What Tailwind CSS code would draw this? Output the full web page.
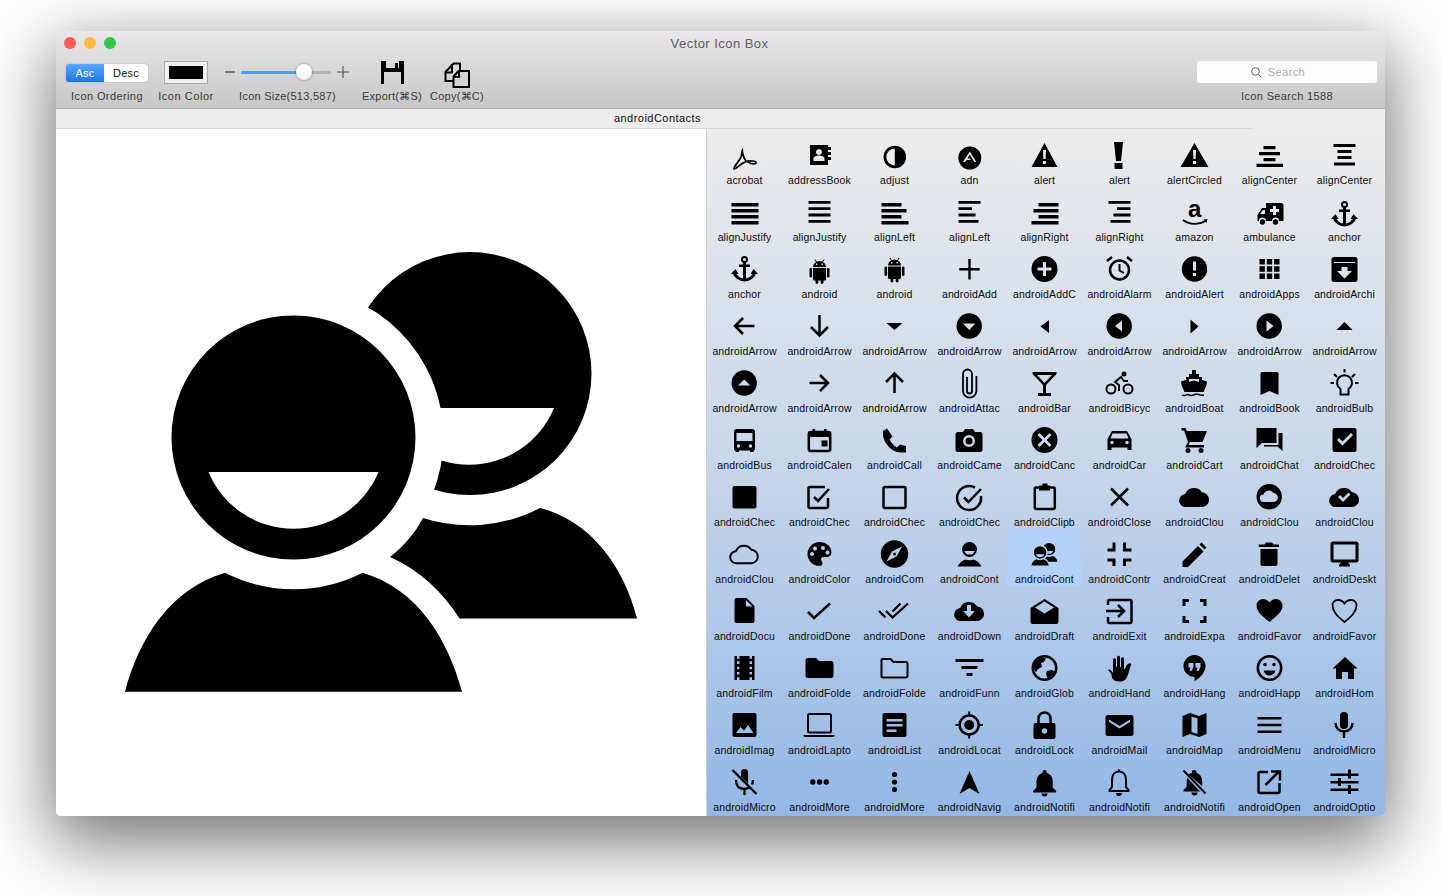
<!DOCTYPE html>
<html lang="en">
<head>
<meta charset="utf-8">
<title>Vector Icon Box</title>
<script src="https://cdn.jsdelivr.net/npm/@tailwindcss/browser@4"></script>
</head>
<body class="bg-white h-[896px] overflow-hidden font-['Liberation_Sans',Arial,sans-serif] antialiased">
<div class="pt-[31px] pl-[56px]">
<div class="w-[1329px] h-[785px] rounded-[5px] overflow-hidden flex flex-col bg-white shadow-[0_22px_70px_4px_rgba(0,0,0,0.56)]">

<header class="h-[78px] shrink-0 flex flex-col bg-linear-to-b from-[#e9e7e9] to-[#c8c7c8] border-b border-[#b1b1b1]">
  <div class="relative h-[25px] flex items-center justify-center text-[13px] tracking-[0.45px] pr-[2px] text-[#605e60]">
    <div class="absolute left-[8px] top-[6px] flex gap-[8px]">
      <span class="size-3 rounded-full bg-[#fc5b57]"></span>
      <span class="size-3 rounded-full bg-[#fdbc40]"></span>
      <span class="size-3 rounded-full bg-[#34c749]"></span>
    </div>
    Vector Icon Box
  </div>
  <div class="flex pl-[10px] pr-[8px] text-[11px] leading-3 text-[#3c3a3c] tracking-[0.25px] *:flex *:flex-col *:items-center">
    <div class="w-[82px]">
      <div class="h-[32px] flex items-center pt-[2px]">
        <div class="flex w-[82px] h-[18px] rounded-[3px] overflow-hidden bg-white shadow-[0_0_1px_rgba(0,0,0,0.5)] text-[11px]">
          <span class="w-[38px] flex items-center justify-center text-white bg-linear-to-b from-[#5aa7fc] to-[#1a72f0]">Asc</span>
          <span class="flex-1 flex items-center justify-center text-[#111]">Desc</span>
        </div>
      </div>
      <div class="mt-[2px] whitespace-nowrap tracking-[0.4px]">Icon Ordering</div>
    </div>
    <div class="w-[44px] ml-[16px]">
      <div class="h-[32px] flex items-center">
        <div class="w-[44px] h-[23px] bg-[#f1f1f1] border border-[#a9a9a9] p-[4px]"><div class="h-full bg-black"></div></div>
      </div>
      <div class="mt-[2px] whitespace-nowrap tracking-[0.55px]">Icon Color</div>
    </div>
    <div class="w-[124px] ml-[17px]">
      <div class="h-[32px] flex items-center gap-[6px]">
        <span class="w-[10px] h-[1.5px] bg-[#777]"></span>
        <div class="relative w-[90px] h-[3px] rounded-full bg-[#b4b4b4]">
          <div class="w-[58px] h-full rounded-full bg-[#4a9cf8]"></div>
          <div class="absolute left-[55px] top-[-7px] size-[16px] rounded-full bg-linear-to-b from-white to-[#f1f1f1] shadow-[0_0_2px_rgba(0,0,0,0.6)]"></div>
        </div>
        <svg class="w-[12px] h-[12px]" viewBox="0 0 12 12" stroke="#555" stroke-width="1.2"><path d="M0 6h12M6 0v12"/></svg>
      </div>
      <div class="mt-[2px] whitespace-nowrap pl-[1px]">Icon Size(513,587)</div>
    </div>
    <div class="w-[60px] ml-[13px]">
      <div class="h-[32px] flex items-center">
        <svg class="w-[23px] h-[23px]" viewBox="0 0 23 23"><path d="M0 0h5v7h9V2h3v5h1V0h5v23h-3V11H3v12H0z"/></svg>
      </div>
      <div class="mt-[2px] whitespace-nowrap">Export(⌘S)</div>
    </div>
    <div class="w-[54px] ml-[8px]">
      <div class="h-[32px] flex items-start pt-[6px]">
        <svg class="w-[26px] h-[26px]" viewBox="0 0 26 26" fill="none" stroke="#000" stroke-width="2"><path d="M9 19H1.5v-9L9.500 1.500H16V8"/><path d="M1.500 10.500H8V2"/><path d="M9.500 14.500L14.500 9H25V25H9.500z"/><path d="M9.500 15H15V9"/></svg>
      </div>
      <div class="mt-[2px] whitespace-nowrap">Copy(⌘C)</div>
    </div>
    <div class="w-[180px] ml-auto">
      <div class="h-[32px] flex items-center">
        <div class="w-[180px] h-[22px] pr-[18px] rounded-[3px] bg-white/95 flex items-center justify-center gap-[6px] text-[#a9a9a9] tracking-[0.4px]">
          <svg class="w-[11px] h-[11px]" viewBox="0 0 11 11" fill="none" stroke="#666" stroke-width="1"><circle cx="4.500" cy="4.500" r="3.800"/><path d="M7.300 7.300L10.500 10.500"/></svg>
          Search
        </div>
      </div>
      <div class="mt-[2px] whitespace-nowrap tracking-[0.35px]">Icon Search 1588</div>
    </div>
  </div>
</header>

<div class="h-[20px] shrink-0 bg-[#ececec] ">
  <div class="w-[1197px] h-[20px] pl-[6px] border-b border-[#d6d6d6] flex items-center justify-center text-[11px] tracking-[0.47px] text-[#111]">androidContacts</div>
</div>

<main class="flex-1 min-h-0 flex">
  <div class="w-[650px] bg-white">
    <svg class="w-[650px] h-[687px] text-white" viewBox="56 129 650 687">
      <g id="ct">
        <circle cx="470" cy="373.600" r="121.500"/>
        <path fill="currentColor" d="M384 408h170a92 92 0 0 1-170 0z"/>
        <path d="M540 508c48 12 83 55 97 110.500H459.500c-18-28-40-48-69.500-61.500c14-11 25-24 33-39A152 152 0 0 0 540 508z"/>
        <circle cx="293.500" cy="437.500" r="150" fill="currentColor"/>
        <circle cx="293.500" cy="437.500" r="122"/>
        <path fill="currentColor" d="M208.500 472h170a92 92 0 0 1-170 0z"/>
        <path d="M225 572.700A152 152 0 0 0 362.600 572.700c55 16 85 66 99.400 119H125c14-53 45-103 100-119z"/>
      </g>
    </svg>
  </div>
  <div class="flex-1 border-l border-[#cfcfcf] bg-linear-to-b from-[#ececec] via-[#c6d6ea] to-[#93b7e6] overflow-hidden pt-[1px]">
    <div class="grid grid-cols-[repeat(9,75px)] auto-rows-[57px] *:flex *:flex-col *:items-center *:pt-[10px] *:pr-[2px] text-[10.5px] tracking-[0.15px] text-[#0c0c0c] [&_svg]:size-8 [&_svg]:shrink-0 [&_path]:[fill-rule:evenodd] [&_p]:mt-[2px] [&_p]:ml-[2px] [&_p]:leading-3 [&_p]:whitespace-nowrap">

<div><svg viewBox="0 0 32 32" fill="none" stroke="#000" stroke-width="1.700"><path d="M15 9c-1.500 0 -.5 8 3 12c2 2 8.500 4 10 2c1-2-6-3-11-1c-5 2-10 8-11 7c-1-2 5-7 7-12c1-3 1-8 2-8z"/></svg><p>acrobat</p></div>
<div><svg viewBox="0 0 32 32"><path d="M7 5h18v20H7zM16 9a3 3 0 1 0 .01 0zM10.500 21v-2.500c0-2 3-3 5.500-3s5.500 1 5.500 3V21z"/><path d="M24.500 7h3.500v3h-3.500zM24.500 12h3.500v3h-3.500zM24.500 17h3.500v3h-3.500z"/></svg><p>addressBook</p></div>
<div><svg viewBox="0 0 32 32"><path d="M5.500 17a11.300 11.300 0 1 0 22.600 0a11.300 11.300 0 1 0-22.600 0zM16.800 8.500a8.500 8.500 0 0 0 0 17z"/></svg><p>adjust</p></div>
<div><svg viewBox="0 0 32 32"><path d="M5.300 18a11.500 11.500 0 1 0 23 0a11.500 11.500 0 1 0-23 0zM16.800 11.500l6.500 10.500h-2l-4.500-7.500-2.300 4h2.500l1 1.500h-4.500l-1.500 2h-2z"/></svg><p>adn</p></div>
<div><svg viewBox="0 0 32 32"><path d="M16.500 3L29.500 27H3.500zM15 10h3l-.4 9h-2.200zM15 21h3v3h-3z"/></svg><p>alert</p></div>
<div><svg viewBox="0 0 32 32"><path d="M11 2h9l-2 19h-5zM11.500 23h8v6h-8z"/></svg><p>alert</p></div>
<div><svg viewBox="0 0 32 32"><path d="M16.500 3L30.500 27H2.500zM15 10h3l-.4 9h-2.200zM15 21h3v3h-3z"/></svg><p>alertCircled</p></div>
<div><svg viewBox="0 0 32 32"><path d="M10.500 6h12v3.300h-12zM6 12h21v3.300H6zM10.500 18h12v3.300h-12zM3.500 23.700h26.500V27H3.500z"/></svg><p>alignCenter</p></div>
<div><svg viewBox="0 0 32 32"><path d="M5.500 4h22v3h-22zM9.500 10h14v3h-14zM9.500 16h14v3h-14zM6 22.500h21v3H6z"/></svg><p>alignCenter</p></div>

<div><svg viewBox="0 0 32 32"><path d="M3.500 6h27v3.500h-27zM3.500 12h27v3.500h-27zM3.500 18h27v3.500h-27zM3.500 24h27v3.500h-27z"/></svg><p>alignJustify</p></div>
<div><svg viewBox="0 0 32 32"><path d="M5.500 4h22v2.800h-22zM5.500 10.300h22v2.800h-22zM5.500 16.600h22v2.800h-22zM5.500 22.900h22v2.800h-22z"/></svg><p>alignJustify</p></div>
<div><svg viewBox="0 0 32 32"><path d="M3.500 6h20v3.500h-20zM3.500 12h25v3.500h-25zM3.500 18h20v3.500h-20zM3.500 24h27v3.500h-27z"/></svg><p>alignLeft</p></div>
<div><svg viewBox="0 0 32 32"><path d="M5.500 4h22v2.800h-22zM5.500 10.300h13.500v2.800H5.500zM5.500 16.600h17v2.800h-17zM5.500 22.900h20v2.800h-20z"/></svg><p>alignLeft</p></div>
<div><svg viewBox="0 0 32 32"><path d="M10.500 6h20v3.500h-20zM5.500 12h25v3.500h-25zM10.500 18h20v3.500h-20zM3.500 24h27v3.500h-27z"/></svg><p>alignRight</p></div>
<div><svg viewBox="0 0 32 32"><path d="M5.500 4h22v2.800h-22zM14 10.300h13.500v2.800H14zM10.500 16.600h17v2.800h-17zM7.500 22.900h20v2.800h-20z"/></svg><p>alignRight</p></div>
<div><svg class="overflow-visible" viewBox="0 0 32 32"><text x="10" y="20" font-size="24" font-weight="700" font-family="Liberation Sans">a</text><path fill="none" stroke="#000" stroke-width="1.800" d="M5 23c7 5 16 5 22.500 1"/><path d="M25.500 22.500l4-.5-1 4z"/></svg><p>amazon</p></div>
<div><svg viewBox="0 0 32 32"><path d="M13 6h15a2.500 2.500 0 0 1 2.500 2.500V24h-4.500a3.500 3.500 0 0 0-7 0h-6a3.500 3.500 0 0 0-7 0H4.500v-6L9 11h4zM20 9h3v3h3v3h-3v3h-3v-3h-3v-3h3zM7 17l3-4h2v4z"/><circle cx="9.500" cy="25" r="2.700"/><circle cx="22.500" cy="25" r="2.700"/></svg><p>ambulance</p></div>
<div><svg viewBox="0 0 32 32"><g id="an"><circle cx="16.500" cy="7.500" r="2.500" fill="none" stroke="#000" stroke-width="2"/><path d="M15 10h3v17h-3z"/><path d="M11 12.500h11V15H11z"/><path fill="none" stroke="#000" stroke-width="3" d="M6 20c1 5 6 8 10.500 8s9.500-3 10.500-8"/><path d="M3 22l4.500-5 3 5zM30 22l-4.500-5-3 5z"/></g></svg><p>anchor</p></div>

<div><svg viewBox="0 0 32 32"><use href="#an" y="-2"/></svg><p>anchor</p></div>
<div><svg viewBox="0 0 32 32"><g id="dr"><path d="M10 13a6.500 6 0 0 1 13 0zM13 9.500h1.500V11H13zM18.500 9.500H20V11h-1.500z"/><path stroke="#000" d="M12 5.500l1.500 2.500M21 5.500L19.500 8"/><path d="M10 14h13v11a1.500 1.500 0 0 1-1.500 1.500h-10A1.500 1.500 0 0 1 10 25z"/><rect x="6.500" y="14" width="2.600" height="9.500" rx="1.300"/><rect x="23.900" y="14" width="2.600" height="9.500" rx="1.300"/><rect x="12.500" y="25" width="2.800" height="5" rx="1.400"/><rect x="17.700" y="25" width="2.800" height="5" rx="1.400"/></g></svg><p>android</p></div>
<div><svg viewBox="0 0 32 32"><use href="#dr" y="-1.500"/></svg><p>android</p></div>
<div><svg viewBox="0 0 32 32"><path d="M15.300 5h2.400v9h9v2.400h-9v9h-2.400v-9h-9V14h9z"/></svg><p>androidAdd</p></div>
<div><svg viewBox="0 0 32 32"><path d="M3.500 15a13 13 0 1 0 26 0a13 13 0 1 0-26 0zM15 8h3v5.500h5.500v3H18V22h-3v-5.500H9.500v-3H15z"/></svg><p>androidAddC</p></div>
<div><svg viewBox="0 0 32 32" fill="none" stroke="#000" stroke-width="2.500"><circle cx="16.500" cy="16" r="9.500"/><path stroke-width="2" d="M16.500 10v6.500l4.500 2.500"/><path d="M4 7l5-4M29 7l-5-4"/></svg><p>androidAlarm</p></div>
<div><svg viewBox="0 0 32 32"><path d="M3.800 15a12.700 12.700 0 1 0 25.400 0a12.700 12.700 0 1 0-25.400 0zM15 7.500h3v9h-3zM15 19h3v3h-3z"/></svg><p>androidAlert</p></div>
<div><svg viewBox="0 0 32 32"><path fill="none" stroke="#000" stroke-width="5.400" stroke-dasharray="5.400 1.900" d="M6.500 7.700h20M6.500 15h20M6.500 22.300h20"/></svg><p>androidApps</p></div>
<div><svg viewBox="0 0 32 32"><path d="M6 3h21a2.500 2.500 0 0 1 2.500 2.500v20A2.500 2.500 0 0 1 27 28H6a2.500 2.500 0 0 1-2.500-2.500v-20A2.500 2.500 0 0 1 6 3zM6 8h21v1H6zM13.500 13h6v4h4.500l-7.500 7.500-7.500-7.500h4.500z"/></svg><p>androidArchi</p></div>

<div><svg viewBox="0 0 32 32" fill="none" stroke="#000" stroke-width="2.500"><path d="M7.500 15h19M15 7l-8 8 8 8"/></svg><p>androidArrow</p></div>
<div><svg viewBox="0 0 32 32" fill="none" stroke="#000" stroke-width="2.500"><path d="M16.500 4v20M8 16l8.500 8.500L25 16"/></svg><p>androidArrow</p></div>
<div><svg viewBox="0 0 32 32"><path d="M8.500 12h16l-8 7z"/></svg><p>androidArrow</p></div>
<div><svg viewBox="0 0 32 32"><path d="M3.500 15a12.700 12.700 0 1 0 25.400 0a12.700 12.700 0 1 0-25.400 0zM10 12.500h12.400l-6.200 6.500z"/></svg><p>androidArrow</p></div>
<div><svg viewBox="0 0 32 32"><path d="M21 9v13l-8.500-6.500z"/></svg><p>androidArrow</p></div>
<div><svg viewBox="0 0 32 32"><path d="M3.500 15a12.700 12.700 0 1 0 25.400 0a12.700 12.700 0 1 0-25.400 0zM19 9.500v11l-7-5.500z"/></svg><p>androidArrow</p></div>
<div><svg viewBox="0 0 32 32"><path d="M12.500 8.500l8 7-8 7z"/></svg><p>androidArrow</p></div>
<div><svg viewBox="0 0 32 32"><path d="M3.500 15a12.700 12.700 0 1 0 25.400 0a12.700 12.700 0 1 0-25.400 0zM13.500 9.500l7 5.500-7 5.500z"/></svg><p>androidArrow</p></div>
<div><svg viewBox="0 0 32 32"><path d="M8.500 19l8-8 8 8z"/></svg><p>androidArrow</p></div>

<div><svg viewBox="0 0 32 32"><path d="M3.500 15a12.700 12.700 0 1 0 25.400 0a12.700 12.700 0 1 0-25.400 0zM10 17.500l6.200-6 6.200 6z"/></svg><p>androidArrow</p></div>
<div><svg viewBox="0 0 32 32" fill="none" stroke="#000" stroke-width="2.500"><path d="M6.500 15h19M17 7l8 8-8 8"/></svg><p>androidArrow</p></div>
<div><svg viewBox="0 0 32 32" fill="none" stroke="#000" stroke-width="2.500"><path d="M16.500 25V6M8 14l8.500-8.500L25 14"/></svg><p>androidArrow</p></div>
<div><svg viewBox="0 0 32 32" fill="none" stroke="#000" stroke-width="1.800"><path d="M14 9v14a2.500 2.500 0 0 0 5 0V6a4.500 4.500 0 0 0-9 0v17a6.700 6.700 0 0 0 13.400 0V8"/></svg><p>androidAttac</p></div>
<div><svg viewBox="0 0 32 32"><path d="M4.500 4h24v2L18 17v8h5v3H10v-3h5V17L4.500 6zM9 7l7.500 8L24 7z"/></svg><p>androidBar</p></div>
<div><svg viewBox="0 0 32 32"><g fill="none" stroke="#000" stroke-width="2"><circle cx="8" cy="21" r="4.500"/><circle cx="25" cy="21" r="4.500"/><path d="M16 23v-6l-4-3 6-5 3 4h4"/></g><circle cx="21" cy="6" r="2.500"/></svg><p>androidBicyc</p></div>
<div><svg viewBox="0 0 32 32"><path d="M14 2h4v4h-4z"/><path d="M11 6h10v3h3v3l5 1.500c0 4-2.500 8-3.500 10.500h-19C5.500 21.500 3 17.500 3 13.500L8 12V9h3zM11 11h10v3l-5-1.500-5 1.500z"/><path fill="none" stroke="#000" stroke-width="1.500" d="M4 27c3 2 5-1 6-.5s3 2 6.500 0 4.500 2 9.500.5"/></svg><p>androidBoat</p></div>
<div><svg viewBox="0 0 32 32"><path d="M9 4h15a1.500 1.500 0 0 1 1.500 1.500V27l-9-4-9 4V5.500A1.500 1.500 0 0 1 9 4z"/></svg><p>androidBook</p></div>
<div><svg viewBox="0 0 32 32" fill="none" stroke="#000" stroke-width="2"><path d="M12.500 21a7.500 7.500 0 1 1 8 0v5.500h-8z"/><path d="M16.500 1v3.500M6 6l3 3M27 6l-3 3M2.500 15h3.500M27 15h3.500"/></svg><p>androidBulb</p></div>

<div><svg viewBox="0 0 32 32"><path d="M9 4h15a3 3 0 0 1 3 3v17a1.500 1.500 0 0 1-1.500 1.500V27H22v-1.500H11V27H7.500v-1.500A1.500 1.500 0 0 1 6 24V7a3 3 0 0 1 3-3zM8.500 8h16v8h-16zM8.800 21a1.700 1.700 0 1 0 3.400 0a1.700 1.700 0 1 0-3.400 0zM20.800 21a1.700 1.700 0 1 0 3.400 0a1.700 1.700 0 1 0-3.400 0z"/></svg><p>androidBus</p></div>
<div><svg viewBox="0 0 32 32"><rect x="5.800" y="7" width="21.400" height="19" rx="2" fill="none" stroke="#000" stroke-width="2.500"/><path d="M5 7h23v5H5zM9.500 4H12v3H9.500zM21 4h2.500v3H21zM18.500 15.500h6v6h-6z"/></svg><p>androidCalen</p></div>
<div><svg viewBox="0 0 32 32"><path d="M9 3.500l-4 2.500c-.5 7 2 12 6.500 16.500S21 28 28 27.500V21l-6-1.500-3 3c-3-1.500-6-5-7.500-8l3-3z"/></svg><p>androidCall</p></div>
<div><svg viewBox="0 0 32 32"><path d="M12 4h8l2 3h5a2.500 2.500 0 0 1 2.500 2.500v15a2.500 2.500 0 0 1-2.500 2.500H5a2.500 2.500 0 0 1-2.500-2.500v-15A2.500 2.500 0 0 1 5 7h5zM10 16a6 6 0 1 0 12 0a6 6 0 1 0-12 0zM12.500 16a3.500 3.500 0 1 0 7 0a3.500 3.500 0 1 0-7 0z"/></svg><p>androidCame</p></div>
<div><svg viewBox="0 0 32 32"><path d="M3.500 15a13 13 0 1 0 26 0a13 13 0 1 0-26 0zM11.500 8l5 5 5-5 2 2-5 5 5 5-2 2-5-5-5 5-2-2 5-5-5-5z"/></svg><p>androidCanc</p></div>
<div><svg viewBox="0 0 32 32"><path d="M9 6h15l4.500 8v11h-4v-2.500h-16V25h-4V14zM9.500 8.500L7.500 13.500h18l-2-5zM7.200 17.500a1.800 1.800 0 1 0 3.600 0a1.800 1.800 0 1 0-3.600 0zM22.200 17.500a1.800 1.800 0 1 0 3.600 0a1.800 1.800 0 1 0-3.600 0z"/></svg><p>androidCar</p></div>
<div><svg viewBox="0 0 32 32"><path d="M3.500 3h4l1.500 3H29l-4.500 11H12L10.500 20H26v2.500H7l3-5.500L6 5.500H3.500z"/><circle cx="10" cy="25.500" r="2.500"/><circle cx="23" cy="25.500" r="2.500"/></svg><p>androidCart</p></div>
<div><svg viewBox="0 0 32 32"><path d="M3.500 3h20v15H9l-5.500 5z"/><path d="M25.500 8h4v18l-5-4.500H11V20h14.500z"/></svg><p>androidChat</p></div>
<div><svg viewBox="0 0 32 32"><path d="M6.500 3h20a2 2 0 0 1 2 2v20a2 2 0 0 1-2 2h-20a2 2 0 0 1-2-2V5a2 2 0 0 1 2-2zM9 15l2-2 3.500 3.500L23 8l2 2-10.500 10.500z"/></svg><p>androidChec</p></div>

<div><svg viewBox="0 0 32 32"><rect x="4.500" y="4" width="24" height="22.500" rx="2"/></svg><p>androidChec</p></div>
<div><svg viewBox="0 0 32 32" fill="none" stroke="#000" stroke-width="2.500"><path d="M25 16v8.500a1.500 1.500 0 0 1-1.500 1.500H7a1.500 1.500 0 0 1-1.500-1.500v-18A1.500 1.500 0 0 1 7 5h15"/><path d="M11 15l4 4 11-12"/></svg><p>androidChec</p></div>
<div><svg viewBox="0 0 32 32" fill="none" stroke="#000" stroke-width="2.500"><rect x="5.500" y="5" width="22" height="21" rx="1.500"/></svg><p>androidChec</p></div>
<div><svg viewBox="0 0 32 32" fill="none" stroke="#000" stroke-width="2.500"><path d="M27.900 14A12 12 0 1 1 22 5.600"/><path d="M11 15.500l4.500 4.500L28 7"/></svg><p>androidChec</p></div>
<div><svg viewBox="0 0 32 32"><rect x="6.800" y="5.500" width="20" height="21.500" rx="1.500" fill="none" stroke="#000" stroke-width="2.500"/><path d="M11 3.500h3.500V1.500h5v2H22V8.500H11z"/></svg><p>androidClipb</p></div>
<div><svg viewBox="0 0 32 32" fill="none" stroke="#000" stroke-width="2.500"><path d="M8 6.500l17 17M25 6.500l-17 17"/></svg><p>androidClose</p></div>
<div><svg viewBox="0 0 32 32"><path d="M8 25a6.500 6.500 0 0 1-.8-13A9.500 9.500 0 0 1 24 10.300a7.300 7.300 0 0 1-.5 14.700z"/></svg><p>androidClou</p></div>
<div><svg viewBox="0 0 32 32"><path d="M3.500 14.700a12.700 12.700 0 1 0 25.400 0a12.700 12.700 0 1 0-25.400 0zM11 20a3.800 3.800 0 0 1-.5-7.600A5.700 5.700 0 0 1 20.500 11a4.400 4.400 0 0 1-.3 9z"/></svg><p>androidClou</p></div>
<div><svg viewBox="0 0 32 32"><path d="M8 25a6.500 6.500 0 0 1-.8-13A9.500 9.500 0 0 1 24 10.300a7.300 7.300 0 0 1-.5 14.700zM10 15l2-2 3 3 5.500-5.500 2 2-7.500 7.500z"/></svg><p>androidClou</p></div>

<div><svg viewBox="0 0 32 32"><path transform="translate(1.200 1.200) scale(.92)" fill="none" stroke="#000" stroke-width="2.100" d="M8 25a6.500 6.500 0 0 1-.8-13A9.500 9.500 0 0 1 24 10.300a7.300 7.300 0 0 1-.5 14.700z"/></svg><p>androidClou</p></div>
<div><svg viewBox="0 0 32 32"><path d="M16.500 3C10 3 4.500 8.500 4.500 15s5.500 12 12 12c2 0 3-1.200 3-2.700c0-1.800-1.500-2.500-1.500-4s1-2.300 3-2.300h3c2.500 0 4.500-2 4.500-4.500C28.500 7.500 23 3 16.500 3zM7 15a2 2 0 1 0 4 0a2 2 0 1 0-4 0zM10 9.500a2 2 0 1 0 4 0a2 2 0 1 0-4 0zM18 9a2 2 0 1 0 4 0a2 2 0 1 0-4 0zM22.500 13.500a2 2 0 1 0 4 0a2 2 0 1 0-4 0z"/></svg><p>androidColor</p></div>
<div><svg viewBox="0 0 32 32"><path d="M2.800 15a13.700 13.700 0 1 0 27.400 0a13.700 13.700 0 1 0-27.400 0zM24 7.500l-5.500 10-10 5 5.500-10z"/><circle cx="16.500" cy="15" r="1.500"/></svg><p>androidCom</p></div>
<div><svg viewBox="0 0 32 32"><path d="M9 10.500a7.500 7.500 0 1 0 15 0a7.500 7.500 0 1 0-15 0zM11.200 12h10.600a5.700 5.700 0 0 1-10.600 0z"/><path d="M12.500 20.500c2.500 1 5.500 1 8 0c3.500 1 6 3.500 8 7H4.500c2-3.500 4.500-6 8-7z"/></svg><p>androidCont</p></div>
<div class="bg-[#b3d1f9]"><svg class="text-[#b3d1f9]" viewBox="0 0 32 32"><use href="#ct" transform="translate(-2.900 -8.900) scale(.051)"/></svg><p>androidCont</p></div>
<div><svg viewBox="0 0 32 32" fill="none" stroke="#000" stroke-width="3"><path d="M4.500 11h6.500V3.500M21.500 3.500V11h7M4.500 21h6.500v6M28.500 21h-7v6"/></svg><p>androidContr</p></div>
<div><svg viewBox="0 0 32 32"><path d="M4.500 28v-5.500L20 7l5.500 5.500L10 28zM21.500 5.500l2-2 5 5-2 2z"/></svg><p>androidCreat</p></div>
<div><svg viewBox="0 0 32 32"><path d="M7.500 10h17v15a2 2 0 0 1-2 2h-13a2 2 0 0 1-2-2z"/><path d="M5.500 5.500h6l1.500-2h6l1.500 2h5.500V8h-20z"/></svg><p>androidDelet</p></div>
<div><svg viewBox="0 0 32 32"><path d="M5 2.500h23a2.500 2.500 0 0 1 2.500 2.500v16a2.500 2.500 0 0 1-2.500 2.500h-8l2 2.500v1.500H11v-1.500l2-2.500H5a2.500 2.500 0 0 1-2.500-2.500V5A2.500 2.500 0 0 1 5 2.500zM5.500 5.500v15h22v-15z"/></svg><p>androidDeskt</p></div>

<div><svg viewBox="0 0 32 32"><path d="M8.500 2h10l8 8v15a2 2 0 0 1-2 2h-16a2 2 0 0 1-2-2V4a2 2 0 0 1 2-2zM18 4v6.500h6.500z"/></svg><p>androidDocu</p></div>
<div><svg viewBox="0 0 32 32" fill="none" stroke="#000" stroke-width="2.500"><path d="M5 16l6 6L27 7.500"/></svg><p>androidDone</p></div>
<div><svg viewBox="0 0 32 32" fill="none" stroke="#000" stroke-width="2.300"><path d="M1 15l6.500 6.500M8 15l6.500 6.500L30 7.500M14.500 15.500l8-8"/></svg><p>androidDone</p></div>
<div><svg viewBox="0 0 32 32"><path d="M8 25a6.500 6.500 0 0 1-.8-13A9.500 9.500 0 0 1 24 10.300a7.300 7.300 0 0 1-.5 14.700zM14 9h4v6h4l-6 6.500L10 15h4z"/></svg><p>androidDown</p></div>
<div><svg viewBox="0 0 32 32"><path d="M16.500 3l14 9v14a2 2 0 0 1-2 2H4.500a2 2 0 0 1-2-2V12zM7 11.500l9.500 6 9.500-6-9.500-6z"/></svg><p>androidDraft</p></div>
<div><svg viewBox="0 0 32 32" fill="none" stroke="#000" stroke-width="2.500"><path d="M5 9V5.500A1.500 1.500 0 0 1 6.500 4h20.500a1.500 1.500 0 0 1 1.500 1.500v20A1.500 1.500 0 0 1 27 27H6.500A1.500 1.500 0 0 1 5 25.500V21"/><path d="M3 15h18M15 9l6 6-6 6"/></svg><p>androidExit</p></div>
<div><svg viewBox="0 0 32 32" fill="none" stroke="#000" stroke-width="3"><path d="M6 10V4.500h5M22 4.500h5V10M6 20v5.500h5M22 25.500h5V20"/></svg><p>androidExpa</p></div>
<div><svg viewBox="0 0 32 32"><path d="M16.500 26C10 20.500 3.500 16 3.500 9.500C3.500 6 6.500 3 10 3c2.500 0 5 1.300 6.500 3.500C18 4.300 20.500 3 23 3c3.500 0 6.500 3 6.500 6.500c0 6.500-6.500 11-13 16.500z"/></svg><p>androidFavor</p></div>
<div><svg viewBox="0 0 32 32" fill="none" stroke="#000" stroke-width="1.800"><path d="M16.500 26C10 20.500 4.500 16 4.500 9.500C4.500 6 7 4 10 4c2.500 0 5 1.300 6.500 3.500C18 5.300 20.500 4 23 4c3 0 5.500 2 5.500 5.500c0 6.500-5.500 11-12 16.500z"/></svg><p>androidFavor</p></div>

<div><svg viewBox="0 0 32 32"><path transform="translate(1.500 -1) scale(1.250 1.330)" d="M18 3v2h-2V3H8v2H6V3H4v18h2v-2h2v2h8v-2h2v2h2V3h-2zM8 17H6v-2h2v2zm0-4H6v-2h2v2zm0-4H6V7h2v2zm10 8h-2v-2h2v2zm0-4h-2v-2h2v2zm0-4h-2V7h2v2z"/></svg><p>androidFilm</p></div>
<div><svg viewBox="0 0 32 32"><path d="M5 5h8l3 3h12a2.500 2.500 0 0 1 2.500 2.500v12a2.500 2.500 0 0 1-2.500 2.500H5a2.500 2.500 0 0 1-2.500-2.500v-15A2.500 2.500 0 0 1 5 5z"/></svg><p>androidFolde</p></div>
<div><svg viewBox="0 0 32 32" fill="none" stroke="#000" stroke-width="2"><path d="M3.500 9V7a1 1 0 0 1 1-1h8l3 3h12.500a1.500 1.500 0 0 1 1.500 1.500V23a1.500 1.500 0 0 1-1.500 1.500h-23A1.500 1.500 0 0 1 3.500 23z"/></svg><p>androidFolde</p></div>
<div><svg viewBox="0 0 32 32"><path d="M2.500 6h28v3h-28zM8.500 13h16v3h-16zM13.500 20h6v3h-6z"/></svg><p>androidFunn</p></div>
<div><svg viewBox="0 0 32 32"><circle cx="16.500" cy="15" r="11.700" fill="none" stroke="#000" stroke-width="2.500"/><path d="M7 8c3-3 8-4 11-3l-2 4-3 1 1 4-4 2-2 3-3-4c0-3 1-5 2-7zM19 18l5-1 3 2c-1 4-4 6-7 7l-2-5z"/></svg><p>androidGlob</p></div>
<div><svg viewBox="0 0 32 32"><path d="M5 17c1-1 2-.5 3 .5l2 2.500V7c0-2.500 3-2.500 3 0v7h1V4.500c0-2.500 3-2.500 3 0V14h1V6c0-2.500 3-2.500 3 0v10h1c1-3 2-5 4-5.500c1.500-.5 2.500.5 2 1.500c-2 4-2 9-4.500 13c-2 3-4 3.500-7 3.500c-4 0-6-1-7.500-3.500C9 21 7 19 5 17z"/></svg><p>androidHand</p></div>
<div><svg viewBox="0 0 32 32"><path d="M16.500 2C10.500 2 5.500 7 5.500 13s5 11 11 11v4c6-3 11-9 11-15S22.500 2 16.500 2zM10.500 10h5v4l-2 4h-2l1-3.500h-2zM17.500 10h5v4l-2 4h-2l1-3.500h-2z"/></svg><p>androidHang</p></div>
<div><svg viewBox="0 0 32 32"><circle cx="16.500" cy="15" r="11.700" fill="none" stroke="#000" stroke-width="2.500"/><circle cx="12" cy="11.500" r="1.800"/><circle cx="21" cy="11.500" r="1.800"/><path d="M10.500 17.500h12c-1 3.500-3.500 5-6 5s-5-1.500-6-5z"/></svg><p>androidHapp</p></div>
<div><svg viewBox="0 0 32 32"><path d="M17 4L4.500 15.500H8V26h6v-7h6v7h6V15.500h3.500z"/></svg><p>androidHom</p></div>

<div><svg viewBox="0 0 32 32"><path d="M6.500 3h20a2 2 0 0 1 2 2v20a2 2 0 0 1-2 2h-20a2 2 0 0 1-2-2V5a2 2 0 0 1 2-2zM8 23l4.500-6 3.500 3.500 4-5.500 5.500 8z"/></svg><p>androidImag</p></div>
<div><svg viewBox="0 0 32 32"><rect x="5" y="4" width="23" height="18.500" rx="1.500" fill="none" stroke="#000" stroke-width="2"/><path d="M.5 25h31c0 1.500-.5 2-1.500 2H2c-1 0-1.500-.5-1.500-2z"/></svg><p>androidLapto</p></div>
<div><svg viewBox="0 0 32 32"><path d="M6.500 3h20a2 2 0 0 1 2 2v20a2 2 0 0 1-2 2h-20a2 2 0 0 1-2-2V5a2 2 0 0 1 2-2zM8.500 9h16v2.500h-16zM8.500 14h16v2.500h-16zM8.500 19.500h10V22h-10z"/></svg><p>androidList</p></div>
<div><svg viewBox="0 0 32 32"><circle cx="16.200" cy="15" r="9.500" fill="none" stroke="#000" stroke-width="2.500"/><circle cx="16.200" cy="15" r="5"/><path stroke="#000" stroke-width="2" d="M16.200 1.500v4M16.200 24.500v4M2.500 15h4M26 15h4"/></svg><p>androidLocat</p></div>
<div><svg viewBox="0 0 32 32"><path fill="none" stroke="#000" stroke-width="2.500" d="M10.500 13V8.500a6 6 0 0 1 12 0V13"/><path d="M7.500 13h18a2 2 0 0 1 2 2v12a2 2 0 0 1-2 2h-18a2 2 0 0 1-2-2V15a2 2 0 0 1 2-2zM13.800 21a2.700 2.700 0 1 0 5.400 0a2.700 2.700 0 1 0-5.400 0z"/></svg><p>androidLock</p></div>
<div><svg viewBox="0 0 32 32"><path d="M5 5h23a2.500 2.500 0 0 1 2.500 2.500v16a2.500 2.500 0 0 1-2.500 2.500H5a2.500 2.500 0 0 1-2.500-2.500v-16A2.500 2.500 0 0 1 5 5zM6 9.500V12l10.500 6.500L27 12V9.500l-10.500 6.500z"/></svg><p>androidMail</p></div>
<div><svg viewBox="0 0 32 32"><path d="M4.500 6L12 3l9 3 7.500-3v21L21 27l-9-3-7.500 3zM13.500 6.500V22l6 2V8.500z"/></svg><p>androidMap</p></div>
<div><svg viewBox="0 0 32 32"><path d="M4.500 7h24v2.600h-24zM4.500 13.700h24v2.600h-24zM4.500 20.400h24V23h-24z"/></svg><p>androidMenu</p></div>
<div><svg viewBox="0 0 32 32"><rect x="12" y="2" width="8" height="17" rx="4"/><path fill="none" stroke="#000" stroke-width="2.500" d="M7.500 13a8.500 8.500 0 0 0 17 0M16 21.500V28"/></svg><p>androidMicro</p></div>

<div><svg viewBox="0 0 32 32"><path d="M13 5.500a3.500 3.500 0 0 1 7 0v11l-7-7z"/><path fill="none" stroke="#000" stroke-width="2.300" d="M4.500 3l24 24M8 13c0 8 5 9 8.500 9c1.500 0 3-.5 4.500-1.500M25 13c0 2-.5 3-1 4.500M16.500 22v6"/></svg><p>androidMicro</p></div>
<div><svg viewBox="0 0 32 32"><circle cx="9.800" cy="15" r="2.700"/><circle cx="16.500" cy="15" r="2.700"/><circle cx="23.200" cy="15" r="2.700"/></svg><p>androidMore</p></div>
<div><svg viewBox="0 0 32 32"><circle cx="16.500" cy="7.500" r="2.600"/><circle cx="16.500" cy="15" r="2.600"/><circle cx="16.500" cy="22.500" r="2.600"/></svg><p>androidMore</p></div>
<div><svg viewBox="0 0 32 32"><path d="M16.500 4l10 23-10-6-10 6z"/></svg><p>androidNavig</p></div>
<div><svg viewBox="0 0 32 32"><path d="M16.500 3a2.200 2.200 0 0 1 2.200 2.200V6c4 1 6 4.500 6 8.500v6l3.500 3.500v1.500H5V24l3.500-3.500v-6c0-4 2-7.500 6-8.500v-.8A2.200 2.200 0 0 1 16.500 3z"/><path d="M13.500 26.500h6a3 3 0 0 1-6 0z"/></svg><p>androidNotifi</p></div>
<div><svg viewBox="0 0 32 32"><path fill="none" stroke="#000" stroke-width="2" d="M16 4.500c-4.500 0-7 3.500-7 8v7.500l-2.500 3v1h19v-1l-2.500-3v-7.500c0-4.500-2.500-8-7-8z"/><path d="M14.800 2.500h2.400v2.500h-2.400zM13 26h6a3 3 0 0 1-6 0z"/></svg><p>androidNotifi</p></div>
<div><svg viewBox="0 0 32 32"><path d="M16.500 3a2 2 0 0 1 2 2v1c4 1 5.700 4.500 5.700 8.500v4.500L10.500 7.500c1-.8 2-1.300 3.500-1.500V5a2 2 0 0 1 2.500-2zM9 10.500L22 24.500H5.500V23l3-3z"/><path d="M13.500 25.500h6a3 3 0 0 1-6 0z"/><path stroke="#000" stroke-width="2" d="M5.500 3.500l22 23"/></svg><p>androidNotifi</p></div>
<div><svg viewBox="0 0 32 32" fill="none" stroke="#000" stroke-width="2.500"><path d="M15 5H7A1.500 1.500 0 0 0 5.500 6.500v18A1.500 1.500 0 0 0 7 26h18a1.500 1.500 0 0 0 1.500-1.500V16"/><path d="M12.500 18L25 5.500M18 4.500h9v9"/></svg><p>androidOpen</p></div>
<div><svg viewBox="0 0 32 32"><path d="M2.500 6.500h28V9h-28zM2.500 14h28v2.500h-28zM2.500 21.500h28V24h-28z"/><path d="M20 2.500h3v9h-3zM10 11h3v8h-3zM20 18h3v9h-3z"/></svg><p>androidOptio</p></div>

    </div>
  </div>
</main>
</div>
</div>
</body>
</html>
